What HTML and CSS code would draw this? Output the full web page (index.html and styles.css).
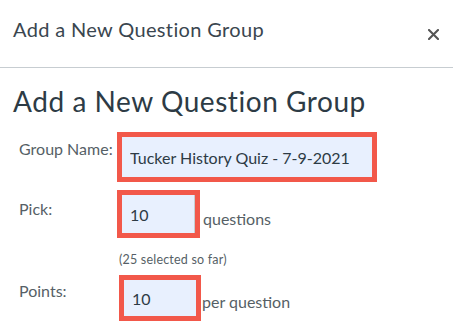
FILE: index.html
```html
<!DOCTYPE html>
<html lang="en">
<head>
<meta charset="utf-8">
<title>Add a New Question Group</title>
<link rel="stylesheet" href="styles.css">
</head>
<body>
<div class="dialog">
  <div class="header">
    <span class="title">Add a New Question Group</span>
    <button class="close" aria-label="Close">
      <svg width="11" height="11" viewBox="0 0 11 11"><path d="M1 1 L10 10 M10 1 L1 10" stroke="#555" stroke-width="2.1" stroke-linecap="round"/></svg>
    </button>
  </div>
  <div class="body">
    <h1 class="heading">Add a New Question Group</h1>
    <div class="row row-name">
      <label class="label">Group Name:</label>
      <div class="hl hl-name"><input class="field" type="text" value="Tucker History Quiz - 7-9-2021"></div>
    </div>
    <div class="row row-pick">
      <label class="label label-pick">Pick:</label>
      <div class="hl hl-pick"><input class="field field-edge" type="text" value="10"></div>
      <span class="suffix">questions</span>
    </div>
    <div class="note">(25 selected so far)</div>
    <div class="row row-points">
      <label class="label label-points">Points:</label>
      <div class="hl hl-points"><input class="field" type="text" value="10"></div>
      <span class="suffix">per question</span>
    </div>
  </div>
</div>
</body>
</html>
```

FILE: styles.css
```css
html, body {
  margin: 0;
  padding: 0;
  background: #fff;
}
body {
  font-family: Lato, "Open Sans", sans-serif;
  color: #2d3b45;
}
.header {
  box-sizing: border-box;
  height: 68px;
  border-bottom: 1px solid #c7cdd1;
  display: flex;
  justify-content: space-between;
  align-items: flex-start;
  padding: 17px 14px 0 13px;
}
.title {
  font-size: 20px;
  letter-spacing: 0.35px;
  line-height: 24px;
  color: #3a464f;
}
.close {
  border: 0;
  background: none;
  padding: 0;
  margin-top: 12px;
  width: 11px;
  height: 11px;
  display: flex;
}
.body {
  padding: 0 0 0 13px;
}
.heading {
  margin: 16px 0 0 0;
  font-size: 28px;
  letter-spacing: 0.55px;
  font-weight: 400;
  line-height: 34px;
  color: #2d3b45;
}
.row {
  display: flex;
  align-items: flex-start;
}
.row-name { margin-top: 14px; }
.row-pick { margin-top: 8px; }
.row-points { margin-top: 8px; }
.label {
  width: 104px;
  flex: none;
  white-space: nowrap;
  padding-left: 6px;
  box-sizing: border-box;
  font-size: 16px;
  line-height: 19px;
  color: #565f66;
  padding-top: 7px;
}
.label-pick { padding-top: 9px; }
.label-points { padding-top: 6px; }
.hl {
  border: 5px solid #f2584a;
  box-sizing: border-box;
  display: flex;
  flex: none;
}
.hl-name { width: 260px; height: 50px; }
.hl-pick { width: 83px; height: 48px; }
.hl-points { width: 82px; height: 46px; margin-left: 2px; }
.field {
  flex: 1;
  min-width: 0;
  border: 0;
  background: #e8f0fe;
  font-family: Lato, "Open Sans", sans-serif;
  font-size: 16px;
  color: #2d3b45;
  padding: 0 0 0 8px;
  margin: 0;
  outline: none;
}
.field-edge { border-right: 1px solid #c7cdd1; }
.suffix {
  align-self: flex-end;
  font-size: 16px;
  line-height: 19px;
  color: #565f66;
  margin: 0 0 10px 3px;
}
.hl-points + .suffix { margin-left: 1px; }
.note {
  margin: 15px 0 0 106px;
  font-size: 12.5px;
  letter-spacing: 0.2px;
  line-height: 14px;
  color: #565f66;
}
```
